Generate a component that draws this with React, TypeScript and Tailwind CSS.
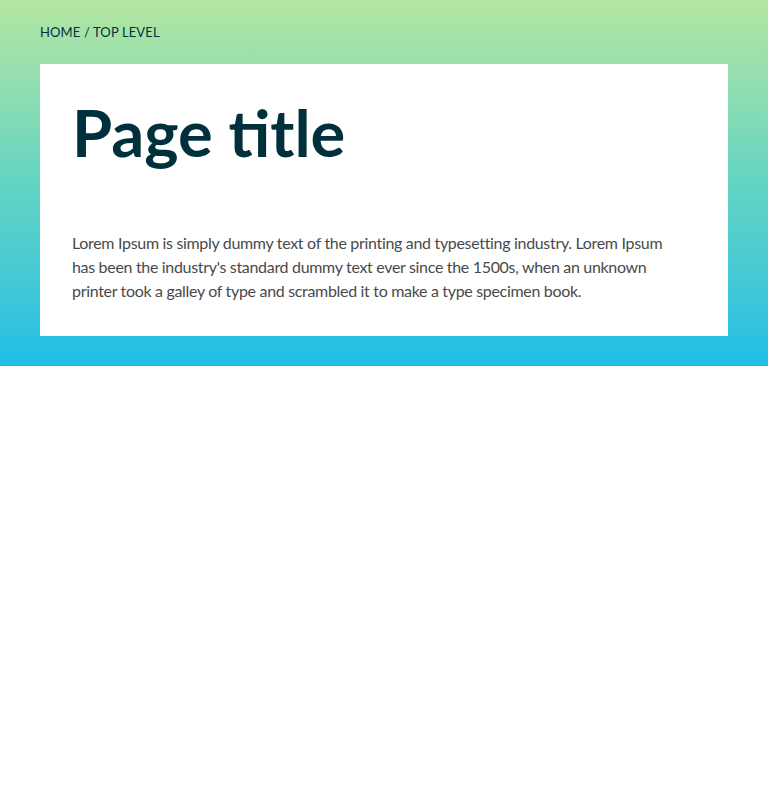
import React from 'react';

export default function App() {
  return (
    <div className="min-h-screen bg-white" style={{ fontFamily: 'Lato, "Open Sans", sans-serif' }}>
      <section className="bg-gradient-to-b from-[#b3e6a0] via-[#62d4c2] to-[#1cbee6] px-10 pt-[22px] pb-[30px]">
        <nav className="text-[13px] leading-5 uppercase text-[#01323f] tracking-[0.01em]">
          Home / Top Level
        </nav>
        <div className="mt-[22px] bg-white px-8 pt-[30px] pb-[33px]">
          <h1 className="text-[65px] leading-[76px] font-bold text-[#00303c]">
            Page title
          </h1>
          <p className="mt-[61px] text-[16px] leading-6 tracking-[-0.02em] text-[#4a4a4a]">
            Lorem Ipsum is simply dummy text of the printing and typesetting industry. Lorem Ipsum
            <br />
            has been the industry's standard dummy text ever since the 1500s, when an unknown
            <br />
            printer took a galley of type and scrambled it to make a type specimen book.
          </p>
        </div>
      </section>
    </div>
  );
}
